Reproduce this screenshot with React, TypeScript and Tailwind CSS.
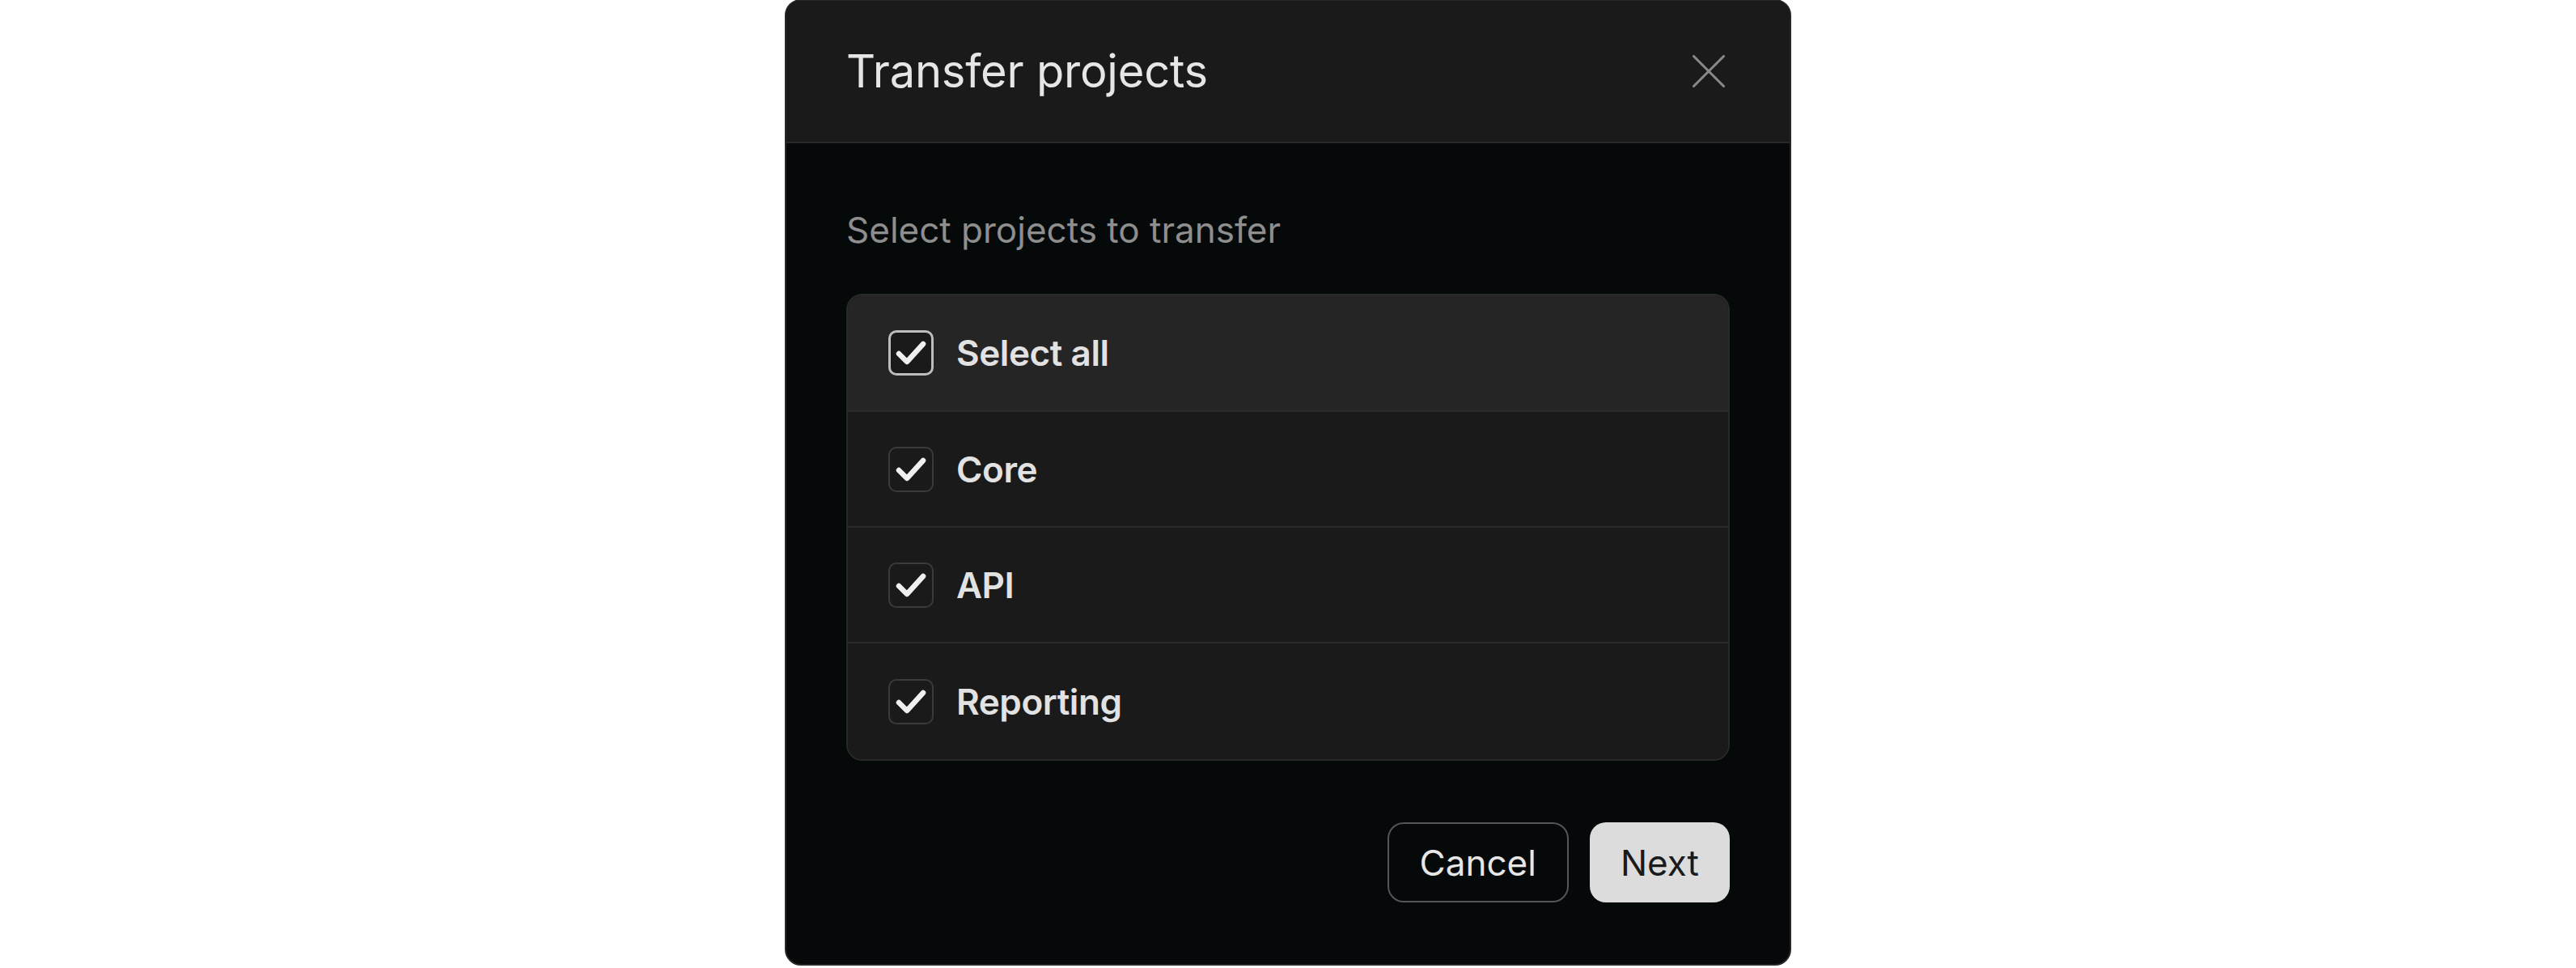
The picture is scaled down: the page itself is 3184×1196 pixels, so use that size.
import React, { useState } from "react";

const projects = ["Core", "API", "Reporting"];

const CheckBox = ({ checked, strong }: { checked: boolean; strong?: boolean }) => {
  return (
    <div
      className={`w-[56px] h-[56px] shrink-0 rounded-[10px] bg-[#1a1a1a] flex items-center justify-center ${
        strong ? "border-[3px] border-[#bdbdbd]" : "border-2 border-[#3a3a3a]"
      }`}
    >
      {checked && (
        <svg width="56" height="56" viewBox="0 0 56 56" fill="none" className="shrink-0">
          <path
            d="M13 29 L23 39 L43 17"
            stroke="#f0f0f0"
            strokeWidth="6.5"
            strokeLinecap="round"
            strokeLinejoin="round"
          />
        </svg>
      )}
    </div>
  );
};

export default function App() {
  const [selected, setSelected] = useState<string[]>(projects);
  const allChecked = selected.length === projects.length;

  const toggle = (name: string) => {
    setSelected((s) => (s.includes(name) ? s.filter((x) => x !== name) : [...s, name]));
  };

  return (
    <div
      className="w-full h-screen bg-white flex items-start justify-center overflow-hidden"
      style={{ fontFamily: "Inter, 'Noto Sans', sans-serif" }}
    >
      <div className="w-[1244px] -mt-px shrink-0 rounded-[20px] border-2 border-[#262626] bg-[#05090a] overflow-hidden flex flex-col">
        {/* header */}
        <div className="h-[176px] bg-[#1a1a1a] border-b-2 border-[#2a2a2a] px-[74px] flex items-center justify-between">
          <h2 className="text-[56px] leading-[68px] font-normal text-[#e6e6e6] tracking-[-0.2px]">
            Transfer projects
          </h2>
          <button className="w-[40px] h-[40px] flex items-center justify-center mr-[6px]">
            <svg width="40" height="40" viewBox="0 0 40 40" fill="none">
              <path d="M1.5 1.5 L38.5 38.5 M38.5 1.5 L1.5 38.5" stroke="#8a8a8a" strokeWidth="3" strokeLinecap="round" />
            </svg>
          </button>
        </div>

        {/* body */}
        <div className="px-[74px] pt-[74px] pb-[76px] flex flex-col">
          <p className="text-[44px] leading-[66px] text-[#8e8e8e]">Select projects to transfer</p>

          <div className="mt-[46px] rounded-[20px] border-2 border-[#2a2a2a] overflow-hidden">
            <div
              className="h-[144px] bg-[#252525] border-b-2 border-[#2a2a2a] pl-[50px] flex items-center gap-[28px] cursor-pointer"
              onClick={() => setSelected(allChecked ? [] : projects)}
            >
              <CheckBox checked={allChecked} strong />
              <span className="text-[44px] leading-none font-semibold tracking-[-0.4px] text-[#e2e2e2]">
                Select all
              </span>
            </div>
            {projects.map((p, i) => (
              <div
                key={p}
                onClick={() => toggle(p)}
                className={`h-[143px] bg-[#1a1a1a] pl-[50px] flex items-center gap-[28px] cursor-pointer ${
                  i < projects.length - 1 ? "border-b-2 border-[#2a2a2a]" : ""
                }`}
              >
                <CheckBox checked={selected.includes(p)} />
                <span className="text-[44px] leading-none font-semibold tracking-[-0.4px] text-[#e2e2e2]">{p}</span>
              </div>
            ))}
          </div>

          <div className="mt-[76px] flex justify-end gap-[26px]">
            <button className="h-[99px] px-[38px] rounded-[20px] border-2 border-[#555555] text-[44px] font-normal text-[#e6e6e6]">
              Cancel
            </button>
            <button className="h-[99px] px-[38px] rounded-[20px] bg-[#dcdcdc] text-[44px] font-normal text-[#1a1a1a]">
              Next
            </button>
          </div>
        </div>
      </div>
    </div>
  );
}
